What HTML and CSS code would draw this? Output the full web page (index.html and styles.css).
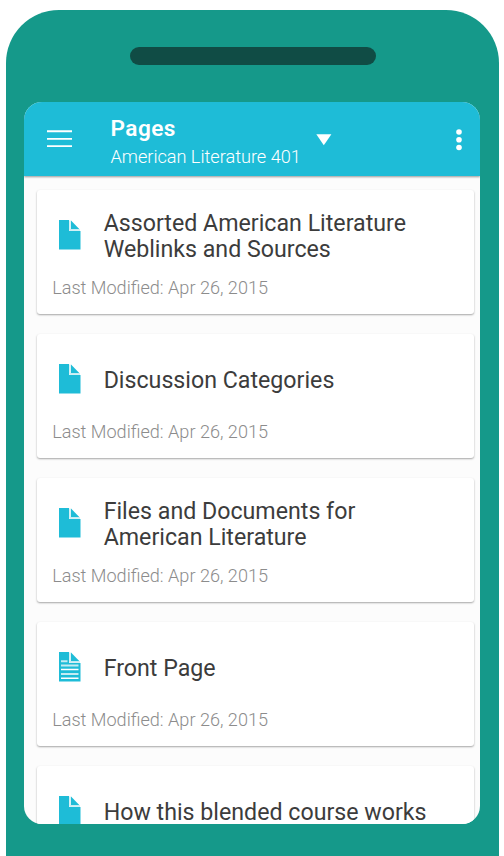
FILE: index.html
```html
<!DOCTYPE html>
<html lang="en">
<head>
<meta charset="utf-8">
<title>Pages</title>
<link rel="stylesheet" href="styles.css">
</head>
<body>
<svg class="sprite" aria-hidden="true">
  <symbol id="page" viewBox="0 0 22 30"><path d="M0 0H10V11H21.5V29.5H0Z"/><path d="M12 .5L20.5 9.3H12Z"/><path class="fold" d="M11 .5V10H21"/></symbol>
</svg>
<div class="phone">
  <div class="speaker"></div>
  <main class="screen">
    <header class="bar">
      <svg class="menu" viewBox="0 0 25 18"><path d="M0 1.2H25M0 8.9H25M0 16.1H25"/></svg>
      <div class="heading">
        <h1>Pages</h1>
        <p>American Literature 401</p>
      </div>
      <svg class="caret" viewBox="0 0 16 12"><path d="M.3 .3H15.4L7.8 11.3Z"/></svg>
      <svg class="more" viewBox="0 0 6 22"><circle cx="3" cy="3" r="2.8"/><circle cx="3" cy="10.8" r="2.8"/><circle cx="3" cy="18.5" r="2.8"/></svg>
    </header>
    <div class="list">
      <article class="card">
        <div class="row"><svg class="icon"><use href="#page"/></svg><h2>Assorted American Literature<br>Weblinks and Sources</h2></div>
        <p>Last Modified: Apr 26, 2015</p>
      </article>
      <article class="card">
        <div class="row"><svg class="icon"><use href="#page"/></svg><h2>Discussion Categories</h2></div>
        <p>Last Modified: Apr 26, 2015</p>
      </article>
      <article class="card">
        <div class="row"><svg class="icon"><use href="#page"/></svg><h2>Files and Documents for<br>American Literature</h2></div>
        <p>Last Modified: Apr 26, 2015</p>
      </article>
      <article class="card">
        <div class="row"><svg class="icon" viewBox="0 0 22 30"><use href="#page"/><path class="soft" d="M2 9.2H8.5M2 13.6H19.5M2 21.9H19.5"/><path class="rule" d="M2 17.5H19.5M2 26.3H19.5"/></svg><h2>Front Page</h2></div>
        <p>Last Modified: Apr 26, 2015</p>
      </article>
      <article class="card">
        <div class="row"><svg class="icon"><use href="#page"/></svg><h2>How this blended course works</h2></div>
      </article>
    </div>
  </main>
</div>
</body>
</html>
```
FILE: styles.css
```css
* { box-sizing: border-box; margin: 0; padding: 0; }
body {
  height: 856px;
  padding: 10.2px 5.5px 0 5.7px;
  background: #fff;
  font-family: Roboto, sans-serif;
  overflow: hidden;
}
.sprite { position: absolute; width: 0; height: 0; }
.phone {
  height: 845.8px;
  padding: 37px 18.5px 0 18.7px;
  border-radius: 53px 53px 0 0;
  background: #15998a;
}
.speaker {
  width: 246px;
  height: 18px;
  margin: 0 0 36.4px 105.6px;
  border-radius: 9px;
  background: #104c45;
}
.screen {
  height: 722.7px;
  border-radius: 18px;
  background: #fcfcfc;
  overflow: hidden;
}
.bar {
  position: relative;
  display: flex;
  align-items: flex-start;
  height: 74.4px;
  padding-left: 22.6px;
  background: #1ebcd7;
  color: #fff;
  box-shadow: 0 1px 2px rgba(0, 0, 0, .4);
}
.menu { width: 25px; height: 18px; margin-top: 28.9px; stroke: #fff; stroke-width: 1.9; }
.heading { width: 190px; margin: 13px 0 0 38.5px; white-space: nowrap; }
.heading h1 { font-size: 22.6px; line-height: 27px; font-weight: 600; letter-spacing: .45px; }
.heading p { font-size: 18.2px; line-height: 29px; font-weight: 300; letter-spacing: -.03px; }
.caret { width: 16px; height: 12px; margin: 32.4px 0 0 16px; fill: #fff; }
.more { width: 6px; height: 22px; margin: 27px 0 0 124px; fill: #fff; }
.list { display: grid; gap: 20px; padding: 14.2px 6px 0 12.6px; }
.card {
  height: 124px;
  padding: 19.3px 15px 0 15.2px;
  border-radius: 3px;
  background: #fff;
  box-shadow: 0 1px 2px rgba(0, 0, 0, .35);
}
.row { display: flex; align-items: center; height: 53px; padding-left: 7px; }
.icon { flex: none; width: 22px; height: 30px; fill: #1ebcd7; margin-top: -1px; }
.fold { fill: none; stroke: #c4ebf2; stroke-width: 1.4; }
.soft { stroke: #c4ebf2; stroke-width: 2; }
.rule { stroke: #fff; stroke-width: 1.4; }
.card h2 {
  margin-left: 22.5px;
  font-size: 23.2px;
  line-height: 26px;
  font-weight: 400;
  color: #3c3c3c;
  white-space: nowrap;
}
.card p { margin-top: 12.4px; font-size: 18.1px; line-height: 26px; font-weight: 300; color: #8c8c8c; }
```
